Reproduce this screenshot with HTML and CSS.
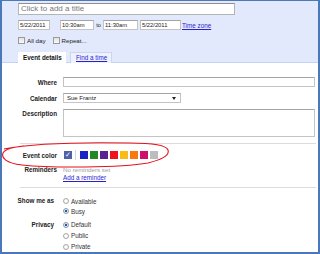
FILE: index.html
```html
<!DOCTYPE html>
<html lang="en">
<head>
    <meta charset="UTF-8">
    <title>Edit event</title>
    <link rel="stylesheet" href="styles.css">
</head>
<body>
    <div class="frame">
        <div class="head">
            <div class="title-box">Click to add a title</div>
            <div class="dates">
                <span class="field date">5/22/2011</span>
                <span class="field time">10:30am</span>
                <span class="to">to</span>
                <span class="field time2">11:30am</span>
                <span class="field date2">5/22/2011</span>
                <a class="link" href="#">Time zone</a>
            </div>
            <div class="checks">
                <span class="check"></span><span class="check-text">All day</span>
                <span class="check second"></span><span class="check-text">Repeat...</span>
            </div>
            <div class="tabs">
                <span class="tab active">Event details</span>
                <a class="tab" href="#">Find a time</a>
            </div>
        </div>

        <div class="body">
            <div class="form">
                <label class="lbl">Where</label>
                <span class="field wide"></span>

                <label class="lbl">Calendar</label>
                <span class="field select">Sue Frantz<i class="arrow"></i></span>

                <label class="lbl top">Description</label>
                <span class="field area"></span>
            </div>

            <div class="sep"></div>

            <div class="form color-row">
                <label class="lbl">Event color</label>
                <div class="swatches">
                    <span class="sw picked">&#10003;</span>
                    <span class="divider"></span>
                    <span class="sw" style="background:#1c1fc4"></span>
                    <span class="sw" style="background:#218a26"></span>
                    <span class="sw" style="background:#5a2290"></span>
                    <span class="sw" style="background:#f0141a"></span>
                    <span class="sw" style="background:#fbbb16"></span>
                    <span class="sw" style="background:#fb7810"></span>
                    <span class="sw" style="background:#cf0f6c"></span>
                    <span class="sw" style="background:#bdbdbd"></span>
                </div>
            </div>

            <div class="form reminders">
                <label class="lbl">Reminders</label>
                <div>
                    <div class="muted">No reminders set</div>
                    <a class="link" href="#">Add a reminder</a>
                </div>
            </div>

            <div class="sep second"></div>

            <div class="form opts">
                <label class="lbl">Show me as</label>
                <div>
                    <div class="opt"><span class="radio"></span>Available</div>
                    <div class="opt"><span class="radio on"></span>Busy</div>
                </div>
            </div>

            <div class="form opts privacy">
                <label class="lbl">Privacy</label>
                <div>
                    <div class="opt"><span class="radio on"></span>Default</div>
                    <div class="opt"><span class="radio"></span>Public</div>
                    <div class="opt"><span class="radio"></span>Private</div>
                </div>
            </div>
        </div>

        <!-- hand drawn mark around the colour picker -->
        <svg class="scribble" width="320" height="254" viewBox="0 0 320 254">
            <path d="M 4 149 C 30 144, 80 142, 130 143 C 150 143, 166 145, 168 150 C 170 156, 160 160, 148 163 C 120 168, 50 168, 22 165 C 6 163, 1 158, 3 153 C 5 149, 14 147, 24 146" fill="none" stroke="#e8101a" stroke-width="1.1"/>
        </svg>
    </div>
</body>
</html>
```

FILE: styles.css
```css
body {
    margin: 0;
    font-family: "Liberation Sans", Arial, sans-serif;
    color: #222;
}
.frame {
    position: relative;
    width: 320px;
    height: 254px;
    box-sizing: border-box;
    border: 2px solid #4b78b8;
    border-top-width: 1px;
    background: #fff;
    overflow: hidden;
}
.head {
    background: #e3e9fd;
    padding: 2px 0 0 16px;
    height: 62px;
    box-sizing: border-box;
    border-bottom: 1px solid #c6d2f2;
}
.title-box {
    width: 217px;
    height: 12px;
    box-sizing: border-box;
    background: #fff;
    border: 1px solid #b4b4b4;
    border-top-color: #8e8e8e;
    padding-left: 2px;
    font-size: 8px;
    line-height: 10px;
    color: #777;
}
.field {
    display: inline-block;
    box-sizing: border-box;
    background: #fff;
    border: 1px solid #c4c4c4;
    border-top-color: #a4a4a4;
    font-size: 5.8px;
    line-height: 8px;
    color: #222;
    padding-left: 1px;
    vertical-align: top;
}
.dates {
    display: flex;
    align-items: center;
    height: 10px;
    margin-top: 5px;
}
.dates .field {
    height: 10px;
}
.date { width: 32px; margin-right: 10px; }
.time { width: 34px; }
.to { font-size: 5.6px; width: 9px; text-align: center; }
.time2 { width: 35px; margin-right: 2px; }
.date2 { width: 41px; margin-right: 1px; }
.link {
    color: #2a1fcf;
    font-size: 6.3px;
    text-decoration: underline;
    white-space: nowrap;
}
.checks {
    display: flex;
    align-items: center;
    margin-top: 6px;
    height: 8px;
    font-size: 6.2px;
}
.check {
    width: 7px;
    height: 7px;
    box-sizing: border-box;
    border: 1px solid #9a9a9a;
    background: linear-gradient(#e2e2e2, #fafafa);
    margin-right: 2px;
}
.check.second {
    margin-left: 7px;
}
.tabs {
    display: flex;
    margin-top: 8px;
    height: 11px;
}
.tab {
    display: block;
    height: 11px;
    box-sizing: border-box;
    font-size: 6.3px;
    line-height: 11px;
    white-space: nowrap;
}
.tab.active {
    width: 48px;
    background: #fff;
    font-weight: bold;
    color: #111;
    height: 12px;
    padding: 0 0 0 5px;
}
a.tab {
    width: 42px;
    margin-left: 4px;
    background: #eef1fe;
    border: 1px solid #cbd5f3;
    border-bottom: none;
    color: #2a1fcf;
    line-height: 10px;
    padding-left: 5px;
}
.body {
    padding-top: 14px;
}
.form {
    display: grid;
    grid-template-columns: 55px 1fr;
    column-gap: 6px;
    row-gap: 6px;
    align-items: center;
    margin-right: 3px;
}
.lbl {
    font-size: 6.3px;
    font-weight: bold;
    text-align: right;
    color: #222;
}
.lbl.top {
    align-self: start;
    padding-top: 1px;
}
.wide {
    height: 10px;
}
.select {
    position: relative;
    width: 118px;
    height: 10px;
    font-size: 6px;
    padding-left: 3px;
}
.arrow {
    position: absolute;
    right: 4px;
    top: 3px;
    width: 0;
    height: 0;
    border-left: 2px solid transparent;
    border-right: 2px solid transparent;
    border-top: 3px solid #222;
}
.area {
    height: 28px;
}
.sep {
    margin: 6px 2px 0 18px;
    border-top: 1px solid #dcdcdc;
}
.color-row {
    margin-top: 7px;
}
.swatches {
    display: flex;
    align-items: center;
    height: 8px;
    margin-left: 1px;
}
.sw {
    width: 8px;
    height: 8px;
    margin-right: 2px;
}
.sw.picked {
    background: #4e62a8;
    color: #fff;
    font-size: 7px;
    line-height: 8px;
    text-align: center;
    margin-right: 3px;
}
.divider {
    width: 1px;
    height: 10px;
    background: #d8d8d8;
    margin-right: 4px;
}
.reminders {
    margin-top: 7px;
    align-items: start;
}
.reminders .lbl {
    line-height: 8px;
}
.muted {
    font-size: 6.2px;
    line-height: 8px;
    color: #a0a0a0;
}
.reminders .link {
    display: block;
    line-height: 8px;
}
.sep.second {
    margin-top: 5px;
}
.opts {
    grid-template-columns: 52px 1fr;
    column-gap: 9px;
    align-items: start;
    margin-top: 8px;
}
.opts .lbl {
    line-height: 9px;
}
.opt {
    display: flex;
    align-items: center;
    height: 10px;
    font-size: 6.3px;
    color: #333;
}
.privacy {
    margin-top: 3px;
}
.privacy .opt {
    height: 11px;
}
.privacy .lbl {
    line-height: 11px;
}
.radio {
    width: 6px;
    height: 6px;
    box-sizing: border-box;
    border-radius: 50%;
    border: 1px solid #a8a8a8;
    background: radial-gradient(circle, #fff 40%, #e6e6e6);
    margin-right: 2px;
}
.radio.on {
    background: radial-gradient(circle, #1e5fa8 35%, #dfe8f2 45%);
    border-color: #8a9ab0;
}
.scribble {
    position: absolute;
    left: -2px;
    top: -1px;
    pointer-events: none;
}
```
